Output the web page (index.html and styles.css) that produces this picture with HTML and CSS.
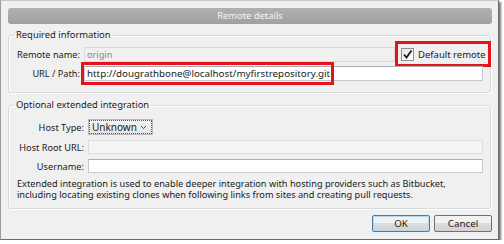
FILE: index.html
```html
<!DOCTYPE html>
<html lang="en">
<head>
    <meta charset="UTF-8">
    <title>Remote details</title>
    <link rel="stylesheet" href="styles.css">
</head>
<body>

    <div class="window">
        <div class="titlebar">Remote details</div>

        <fieldset class="group group-required">
            <legend>Required information</legend>

            <div class="row">
                <label class="label">Remote name:</label>
                <div class="field field-readonly remote-name">origin</div>
                <label class="default-remote">
                    <span class="checkbox">
                        <svg width="11" height="11" viewBox="0 0 11 11">
                            <path d="M2 5.5 L4.5 8.5 L9.5 1.5" fill="none" stroke="#1a1a1a" stroke-width="1.8"></path>
                        </svg>
                    </span>
                    Default remote
                    <span class="callout callout-check"></span>
                </label>
            </div>

            <div class="row">
                <label class="label">URL / Path:</label>
                <div class="field url-field">
                    http://dougrathbone@localhost/myfirstrepository.git
                    <span class="callout callout-url"></span>
                </div>
            </div>
        </fieldset>

        <fieldset class="group group-optional">
            <legend>Optional extended integration</legend>

            <div class="form-grid">
                <label class="label">Host Type:</label>
                <div class="select">
                    Unknown
                    <svg class="chevron" width="7" height="5" viewBox="0 0 7 5">
                        <path d="M1 1 L3.5 3.5 L6 1" fill="none" stroke="#444" stroke-width="1"></path>
                    </svg>
                </div>

                <label class="label">Host Root URL:</label>
                <div class="field field-disabled"></div>

                <label class="label">Username:</label>
                <div class="field"></div>
            </div>

            <p class="hint">
                Extended integration is used to enable deeper integration with hosting providers such as Bitbucket,<br>
                including locating existing clones when following links from sites and creating pull requests.
            </p>
        </fieldset>

        <div class="buttons">
            <button class="btn btn-default">OK</button>
            <button class="btn">Cancel</button>
        </div>
    </div>

</body>
</html>
```

FILE: styles.css
```css
/* Remote details dialog (Windows 7 look) */

:root {
    --window: #f0f0f0;
    --text: #1a1a1a;
    --group-line: #d5dadd;
    --field-line: #abadb3;
    --callout: #e3141c;
}

body {
    margin: 0;
    background: #ffffff;
    font-family: 'Noto Sans', 'Open Sans', sans-serif;
    font-size: 9.2px;
    color: var(--text);
}

/* Dialog frame */
.window {
    width: 499px;
    height: 240px;
    box-sizing: border-box;
    background: var(--window);
    border: 1px solid #6a6a6a;
    border-top-color: #c8c8c8;
    border-left-color: #9a9a9a;
    box-shadow: 2px 2px 2px rgba(0, 0, 0, 0.55);
    padding: 7px 6px 0 7px;
}

.titlebar {
    height: 16px;
    line-height: 16px;
    border-radius: 3px;
    background: linear-gradient(#b0b0b0, #a0a0a0);
    color: #f6f6f6;
    text-align: center;
    font-size: 9.4px;
}

/* Group boxes */
.group {
    margin: 4px 1px 0 0;
    border: 1px solid var(--group-line);
    border-radius: 3px;
    box-shadow: inset 1px 1px 0 #ffffff, 1px 1px 0 #ffffff;
    padding: 0 7px 11px 0;
    min-width: 0;
}

.group legend {
    padding: 0 2px;
    margin-left: 5px;
    font-size: 9.4px;
    line-height: 14px;
}

.group-required {
    padding-top: 5px;
}

.group-optional {
    margin-top: 5px;
    padding-top: 7px;
    padding-bottom: 8px;
}

.row {
    display: flex;
    align-items: center;
    height: 15px;
}

.row + .row {
    margin-top: 4px;
}

.label {
    white-space: nowrap;
    text-align: right;
}

.group-required .label {
    width: 71px;
    flex: none;
    margin-right: 4px;
}

/* Text fields */
.field {
    position: relative;
    box-sizing: border-box;
    height: 15px;
    line-height: 13px;
    padding: 0 2px;
    background: #ffffff;
    border: 1px solid #c5c8cc;
    border-top-color: var(--field-line);
    white-space: nowrap;
}

.field-readonly {
    background: var(--window);
    border-color: #dadada;
    color: #8a8a8a;
}

.field-disabled {
    background: #f4f4f4;
    border-color: #dedede;
}

.remote-name {
    width: 311px;
    flex: none;
}

.url-field {
    flex: 1;
    font-size: 9.8px;
}

/* Checkbox */
.default-remote {
    position: relative;
    display: flex;
    align-items: center;
    gap: 4px;
    margin-left: 6px;
    white-space: nowrap;
    font-size: 9.5px;
}

.checkbox {
    width: 13px;
    height: 13px;
    box-sizing: border-box;
    border: 1px solid #8e8f8f;
    background: linear-gradient(135deg, #e6e6e6, #ffffff);
    display: flex;
    align-items: center;
    justify-content: center;
}

/* Red annotation boxes drawn over the dialog */
.callout {
    position: absolute;
    border: 3px solid var(--callout);
    box-sizing: border-box;
    pointer-events: none;
}

.callout-check {
    left: -6px;
    top: -7px;
    width: 96px;
    height: 26px;
}

.callout-url {
    left: -4px;
    top: -5px;
    width: 253px;
    height: 23px;
}

/* Optional group grid */
.form-grid {
    display: grid;
    grid-template-columns: 75px 1fr;
    column-gap: 4px;
    row-gap: 5px;
    align-items: center;
}

.form-grid .field {
    height: 14px;
}

.select {
    width: 65px;
    height: 16px;
    box-sizing: border-box;
    border: 1px solid #b8b8b8;
    outline: 1px dotted #555555;
    outline-offset: -2px;
    background: linear-gradient(#f4f4f4, #e4e4e4);
    line-height: 14px;
    padding: 0 5px 0 3px;
    font-size: 10px;
    display: flex;
    align-items: center;
    justify-content: space-between;
}

.hint {
    margin: 5px 0 0 8px;
    line-height: 11px;
    white-space: nowrap;
}

/* Dialog buttons */
.buttons {
    display: flex;
    justify-content: flex-end;
    gap: 4px;
    margin-top: 6px;
}

.btn {
    width: 58px;
    height: 17px;
    padding: 0;
    border: 1px solid #707070;
    border-radius: 2px;
    background: linear-gradient(#f2f2f2 45%, #dddddd 50%, #d2d2d2);
    font-family: inherit;
    font-size: 9.8px;
    color: var(--text);
}

.btn-default {
    border-color: #3c7fb1;
    box-shadow: inset 0 0 0 1px #b2d8f2;
}
```
